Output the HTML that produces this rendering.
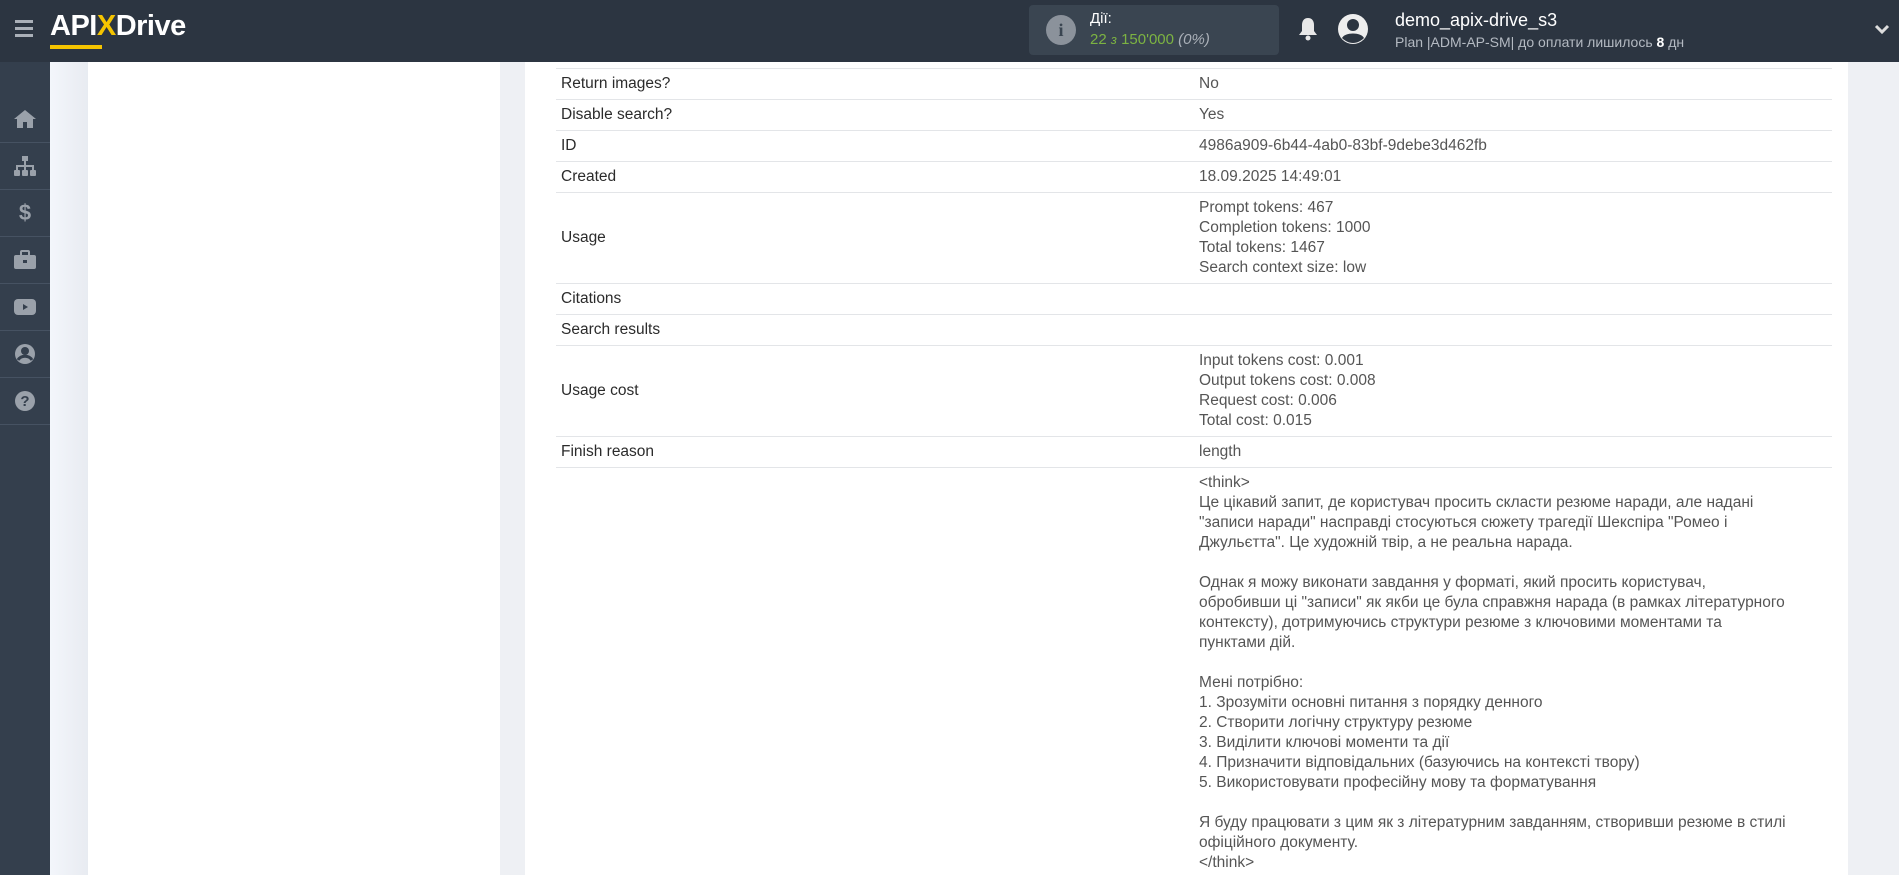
<!DOCTYPE html>
<html><head><meta charset="utf-8"><style>
*{margin:0;padding:0;box-sizing:border-box}
html,body{width:1899px;height:875px;overflow:hidden}
body{background:#eef0f4;font-family:"Liberation Sans","Noto Sans CJK SC",sans-serif}
.wrap{position:relative;width:1899px;height:875px;overflow:hidden}
.hdr{position:absolute;left:0;top:0;width:1899px;height:62px;background:#2c3541;z-index:2}
.side{position:absolute;left:0;top:62px;width:50px;height:813px;background:#343f4d;padding-top:34px}
.side .it{height:47px;border-bottom:1px solid #465262;display:flex;align-items:center;justify-content:center}
.lp{position:absolute;left:88px;top:62px;width:412px;height:813px;background:#fff}
.shade{position:absolute;left:50px;top:62px;width:38px;height:813px;background:linear-gradient(90deg,#f3f6fb,#e8ebf1)}
.mp{position:absolute;left:525px;top:62px;width:1323px;height:813px;background:#fff;overflow:hidden}
table{position:absolute;left:31px;top:0;width:1276px;border-collapse:collapse;font-size:15.5px;line-height:20px}
td{border-bottom:1px solid #e3e5e8;padding:5px 5px;vertical-align:middle}
td.l{color:#2b2b2b;width:638px}
td.v{color:#555}
.think td{vertical-align:top}
</style></head><body><div class="wrap">
<div class="hdr">
 <div style="position:absolute;left:15px;top:20px;width:18px;height:3px;background:#aab0b8;box-shadow:0 7px 0 #aab0b8,0 14px 0 #aab0b8"></div>
 <div style="position:absolute;left:50px;top:10px;font:bold 29px 'Liberation Sans',sans-serif;color:#fff;letter-spacing:-0.5px">API<span style="color:#f5c400">X</span>Drive</div>
 <div style="position:absolute;left:50px;top:45px;width:52px;height:4px;background:#f5c400"></div>
 <div style="position:absolute;left:1029px;top:5px;width:250px;height:50px;background:#3a4551;border-radius:4px">
  <div style="position:absolute;left:17px;top:10px;width:30px;height:30px;border-radius:50%;background:#8b929b;color:#3a4551;font:bold 18px 'Liberation Serif',serif;text-align:center;line-height:30px">i</div>
  <div style="position:absolute;left:61px;top:5px;color:#fff;font-size:15px">Дії:</div>
  <div style="position:absolute;left:61px;top:26px;color:#7cb342;font-size:15px">22 <span style="font-style:italic;font-size:13px">з</span> 150'000 <span style="color:#aab0b8;font-style:italic">(0%)</span></div>
 </div>
 <svg style="position:absolute;left:1297px;top:16px" width="22" height="26" viewBox="0 0 22 26"><path d="M11 2c-4 0-6 3-6 7v6l-3 4h18l-3-4V9c0-4-2-7-6-7z" fill="#e8e8e8"/><circle cx="11" cy="22" r="2.5" fill="#e8e8e8"/></svg>
 <svg style="position:absolute;left:1337px;top:13px" width="32" height="32" viewBox="0 0 32 32"><circle cx="16" cy="16" r="15" fill="#eee"/><circle cx="16" cy="12" r="6" fill="#2c3541"/><path d="M5 25c3-6 19-6 22 0c-3 3-7 5-11 5s-8-2-11-5z" fill="#2c3541"/></svg>
 <div style="position:absolute;left:1395px;top:10px;color:#fff;font-size:18px">demo_apix-drive_s3</div>
 <div style="position:absolute;left:1395px;top:34px;color:#b4bac2;font-size:14px">Plan |ADM-AP-SM| до оплати лишилось <b style="color:#fff">8</b> дн</div>
 <svg style="position:absolute;left:1874px;top:24px" width="16" height="12" viewBox="0 0 16 12"><path d="M2 2l6 6 6-6" stroke="#ddd" stroke-width="3" fill="none"/></svg>
</div>
<div class="side">
 <div class="it"><svg width="24" height="20" viewBox="0 0 24 20"><path d="M12 1L1 10h3v9h6v-6h4v6h6v-9h3z" fill="#9aa1aa"/></svg></div>
 <div class="it"><svg width="24" height="22" viewBox="0 0 24 22"><rect x="9" y="1" width="6" height="5" fill="#9aa1aa"/><path d="M12 6v5M4 15v-4h16v4M12 11v4" stroke="#9aa1aa" stroke-width="2" fill="none"/><rect x="1" y="15" width="6" height="6" rx="1" fill="#9aa1aa"/><rect x="9" y="15" width="6" height="6" rx="1" fill="#9aa1aa"/><rect x="17" y="15" width="6" height="6" rx="1" fill="#9aa1aa"/></svg></div>
 <div class="it"><span style="color:#9aa1aa;font:bold 22px 'Liberation Sans',sans-serif">$</span></div>
 <div class="it"><svg width="24" height="20" viewBox="0 0 24 20"><rect x="1" y="5" width="22" height="14" rx="2" fill="#9aa1aa"/><rect x="8" y="1" width="8" height="5" rx="1" stroke="#9aa1aa" stroke-width="2" fill="none"/><rect x="10" y="10" width="4" height="3" fill="#343f4d"/></svg></div>
 <div class="it"><svg width="24" height="18" viewBox="0 0 24 18"><rect x="1" y="1" width="22" height="16" rx="4" fill="#9aa1aa"/><path d="M10 6v6l5-3z" fill="#343f4d"/></svg></div>
 <div class="it"><svg width="22" height="22" viewBox="0 0 22 22"><circle cx="11" cy="11" r="10" fill="#9aa1aa"/><circle cx="11" cy="8" r="4" fill="#343f4d"/><path d="M4 17c3-5 11-5 14 0" stroke="#343f4d" stroke-width="3" fill="none"/></svg></div>
 <div class="it"><svg width="22" height="22" viewBox="0 0 22 22"><circle cx="11" cy="11" r="10" fill="#9aa1aa"/><text x="11" y="16" text-anchor="middle" font-family="Liberation Sans" font-weight="bold" font-size="15" fill="#343f4d">?</text></svg></div>
</div>
<div class="shade"></div>
<div class="lp"></div>
<div class="mp">
<table>
<tr><td class="l" style="padding:0;height:6px"></td><td class="v" style="padding:0"></td></tr>
<tr><td class="l">Return images?</td><td class="v">No</td></tr>
<tr><td class="l">Disable search?</td><td class="v">Yes</td></tr>
<tr><td class="l">ID</td><td class="v">4986a909-6b44-4ab0-83bf-9debe3d462fb</td></tr>
<tr><td class="l">Created</td><td class="v">18.09.2025 14:49:01</td></tr>
<tr><td class="l">Usage</td><td class="v">Prompt tokens: 467<br>Completion tokens: 1000<br>Total tokens: 1467<br>Search context size: low</td></tr>
<tr><td class="l">Citations</td><td class="v"></td></tr>
<tr><td class="l">Search results</td><td class="v"></td></tr>
<tr><td class="l">Usage cost</td><td class="v">Input tokens cost: 0.001<br>Output tokens cost: 0.008<br>Request cost: 0.006<br>Total cost: 0.015</td></tr>
<tr><td class="l">Finish reason</td><td class="v">length</td></tr>
<tr class="think"><td class="l"></td><td class="v">&lt;think&gt;<br>Це цікавий запит, де користувач просить скласти резюме наради, але надані<br>"записи наради" насправді стосуються сюжету трагедії Шекспіра "Ромео і<br>Джульєтта". Це художній твір, а не реальна нарада.<br><br>Однак я можу виконати завдання у форматі, який просить користувач,<br>обробивши ці "записи" як якби це була справжня нарада (в рамках літературного<br>контексту), дотримуючись структури резюме з ключовими моментами та<br>пунктами дій.<br><br>Мені потрібно:<br>1. Зрозуміти основні питання з порядку денного<br>2. Створити логічну структуру резюме<br>3. Виділити ключові моменти та дії<br>4. Призначити відповідальних (базуючись на контексті твору)<br>5. Використовувати професійну мову та форматування<br><br>Я буду працювати з цим як з літературним завданням, створивши резюме в стилі<br>офіційного документу.<br>&lt;/think&gt;</td></tr>
</table>
</div>
</div></body></html>
